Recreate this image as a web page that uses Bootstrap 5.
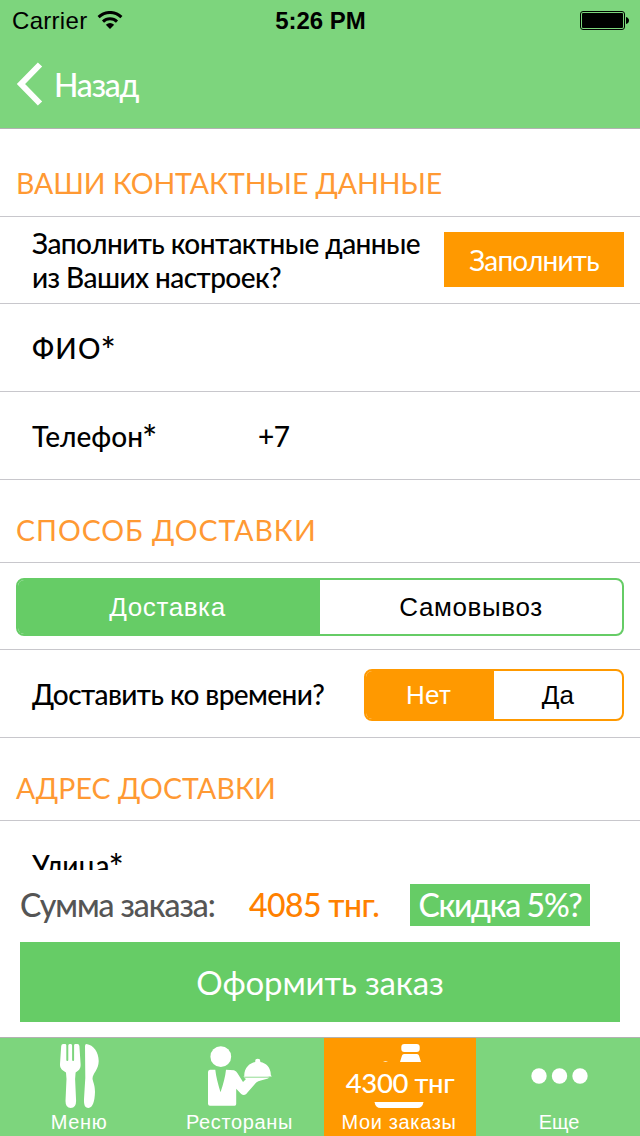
<!DOCTYPE html>
<html lang="ru">
<head>
<meta charset="utf-8">
<meta name="viewport" content="width=device-width, initial-scale=1">
<title>Оформление заказа</title>
<link href="https://cdn.jsdelivr.net/npm/bootstrap@5.3.0/dist/css/bootstrap.min.css" rel="stylesheet">
<style>
  body { font-family: Lato, "Open Sans", sans-serif; font-size: 28px; line-height: 34px; color: #000; background: #fff; font-weight: 500; }
  .screen { width: 640px; height: 1136px; }
  .sys { font-family: "Liberation Sans", Arial, sans-serif; font-weight: 400; }
  .topbar { height: 129px; background: #7dd57d; border-bottom: 1px solid #b2b2b2; }
  .statusbar { height: 40px; font-size: 24px; line-height: 40px; padding: 1px 11px 0 12px; }
  .statusbar > div { flex: 1 1 0; }
  .carrier { letter-spacing: .3px; }
  .wifi { margin-left: 10px; }
  .back { height: 88px; padding-left: 16px; color: #fff; font-size: 32px; letter-spacing: -1.2px; text-decoration: none; }
  .back:hover { color: #fff; }
  .back-label { margin-left: 11px; padding-top: 1px; }
  .form-scroll { height: 741px; }
  .form-row { border-bottom: 1px solid #c8c7cc; height: 88px; padding-left: 32px; padding-right: 16px; }
  .form-row.compact { height: 87px; }
  .field-name { width: 226px; line-height: 34px; }
  .field-name.caps { letter-spacing: 1.2px; }
  .star { font-size: 36px; line-height: 0; letter-spacing: 0; position: relative; top: 5px; margin-left: -1px; }
  .question { letter-spacing: -.57px; }
  .section-head { border-bottom: 1px solid #c8c7cc; height: 83px; padding: 17px 16px 0; color: #ff9933; font-size: 28.5px; font-weight: 400; margin: 0; line-height: 34px; letter-spacing: .1px; }
  .section-head.first { height: 88px; padding-top: 21px; letter-spacing: -.1px; }
  .section-head.wide { letter-spacing: .95px; }
  .btn-fill { width: 180px; height: 55px; margin-bottom: 1px; background: #ff9900; color: #fff; border: 0; border-radius: 0; font-size: 28px; letter-spacing: -.8px; padding: 0; }
  .seg { border: 2px solid; border-radius: 8px; overflow: hidden; font-size: 26px; }
  .seg-green { border-color: #66cc66; height: 58px; margin-top: 2px; letter-spacing: .6px; }
  .seg-orange { border-color: #ff9900; width: 260px; height: 52px; margin-top: 2px; letter-spacing: .3px; }
  .seg .on { color: #fff; padding-right: 3px; }
  .seg-green .on { background: #66cc66; }
  .seg-orange .on { background: #ff9900; }
  .summary { height: 72px; padding: 14px 20px 0; font-size: 32px; line-height: 42px; white-space: nowrap; }
  .sum-label { width: 229px; color: #555; letter-spacing: -1.05px; }
  .sum-price { width: 161px; color: #ff8000; letter-spacing: -.6px; }
  .discount { width: 180px; height: 42px; background: #66cc66; color: #fff; letter-spacing: -1.3px; }
  .btn-order { height: 80px; margin: 0 20px 15px; background: #66cc66; color: #fff; border: 0; border-radius: 0; font-size: 33px; letter-spacing: -.15px; }
  .tabs { height: 99px; background: #7dd57d; border-top: 1px solid #b2b2b2; }
  .tab { color: #fff; font-size: 20px; line-height: 24px; letter-spacing: .65px; text-decoration: none; height: 98px; }
  .tab:hover { color: #fff; }
  .tab svg { height: 72px; display: block; }
  .tab.current { background: #ff9900; }
  .tab-menu { width: 158px; }
  .tab-rest { width: 166px; padding-right: 3px; }
  .tab-cart { width: 152px; padding-right: 2px; }
  .tab-cart svg { width: 152px; }
  .tab-more { width: 164px; letter-spacing: 0; padding-left: 2px; }
  .total { left: 0; right: 0; top: 27px; font: 500 27.5px/36px Lato, sans-serif; letter-spacing: -.4px; }
</style>
</head>
<body>
<div class="screen d-flex flex-column overflow-hidden">
  <header class="topbar flex-shrink-0">
    <div class="statusbar sys d-flex">
      <div class="d-flex align-items-center"><span class="carrier">Carrier</span>
        <svg class="wifi" width="26" height="20" viewBox="0 0 26 20" fill="none" stroke="#000" stroke-width="3"><path d="M1.600 6.100C8-.1 18-.1 24.400 6.100M6 10.600c4-3.800 10-3.800 14 0"/><path d="M8.800 13.800Q13 10 17.200 13.800L13 18Z" fill="#000" stroke="none"/></svg>
      </div>
      <div class="text-center fw-bold">5:26 PM</div>
      <div class="d-flex justify-content-end align-items-center">
        <svg width="49" height="20" viewBox="0 0 49 20"><rect x=".5" y=".5" width="44" height="18" rx="2.500" fill="none" stroke="#000"/><rect x="2" y="2" width="41" height="15" rx="1"/><path d="M46 6q3 1 3 3.500T46 13z"/></svg>
      </div>
    </div>
    <a href="#" class="back d-flex align-items-center">
      <svg width="27" height="44" viewBox="0 0 27 44" fill="none" stroke="#fff" stroke-width="6"><path d="M24 2.500 5 22 24 41.500"/></svg>
      <span class="back-label">Назад</span>
    </a>
  </header>

  <main class="form-scroll flex-shrink-0 overflow-hidden">
    <h2 class="section-head first d-flex align-items-center">ВАШИ КОНТАКТНЫЕ ДАННЫЕ</h2>
    <div class="form-row compact d-flex align-items-center justify-content-between">
      <div class="question">Заполнить контактные данные<br>из Ваших настроек?</div>
      <button class="btn-fill">Заполнить</button>
    </div>
    <div class="form-row d-flex align-items-center"><div class="field-name caps">ФИО<span class="star">*</span></div></div>
    <div class="form-row d-flex align-items-center"><div class="field-name">Телефон<span class="star">*</span></div><span class="question">+7</span></div>
    <h2 class="section-head wide d-flex align-items-center">СПОСОБ ДОСТАВКИ</h2>
    <div class="form-row compact ps-3 d-flex align-items-center">
      <div class="seg seg-green sys d-flex w-100">
        <div class="on w-50 d-flex align-items-center justify-content-center">Доставка</div>
        <div class="w-50 d-flex align-items-center justify-content-center">Самовывоз</div>
      </div>
    </div>
    <div class="form-row d-flex align-items-center justify-content-between">
      <span class="question">Доставить ко времени?</span>
      <div class="seg seg-orange sys d-flex">
        <div class="on w-50 d-flex align-items-center justify-content-center">Нет</div>
        <div class="w-50 d-flex align-items-center justify-content-center">Да</div>
      </div>
    </div>
    <h2 class="section-head d-flex align-items-center">АДРЕС ДОСТАВКИ</h2>
    <div class="form-row d-flex align-items-center"><div class="field-name">Улица<span class="star">*</span></div></div>
  </main>

  <div class="summary d-flex flex-shrink-0">
    <div class="sum-label">Сумма заказа:</div>
    <div class="sum-price">4085 тнг.</div>
    <div class="discount text-center">Скидка 5%?</div>
  </div>
  <button class="btn-order flex-shrink-0">Оформить заказ</button>

  <nav class="tabs sys d-flex flex-shrink-0">
    <a href="#" class="tab tab-menu text-center">
      <svg class="mx-auto" width="60" viewBox="49 1038 60 72" fill="#fff"><path d="M63 1044h2q1.300 0 1.300 1.300V1060q0 1 1 1t1-1v-14.500q0-1.500 1.200-1.500h1.400q1.200 0 1.200 1.500V1060q0 1 1 1t1-1v-14.700q0-1.300 1.300-1.300h2q1.800 0 2 2l1.200 18c.3 5-2 6.500-5 8.500l-.5 6.500 1 22q0 7-5.300 7t-5.300-7l1-22-.5-6.500c-3-2-6.300-3.500-6-8.500l1.200-18q.2-2 2-2z"/><path d="M86.500 1044c7 1 12.200 8 12.200 17 0 9-6.200 12-6.200 18 1 4 2.500 7 2.500 13-.4 10-2.200 15.500-6.500 16-4 0-4.700-4-4.500-9l1.300-21-.3-32q0-2 1.500-2Z"/></svg>
      <span>Меню</span></a>
    <a href="#" class="tab tab-rest text-center">
      <svg class="mx-auto" width="80" viewBox="200 1038 80 72" fill="#fff"><circle cx="220.800" cy="1056.700" r="10.400"/><path d="M210 1069.800h5.300q1 9 5.200 22.500 4.500-13 5.500-22.500l8 .5q2.500 1 3.500 3l5.500 8.700 3-3q-2-1-2.500-2.500h24q2 0 1.700 1-1 1-3 1.500l-4.500 1.300q-4 .7-5.500 2.200l-10 11.500q-2.500 2-5 0l-5-5.200V1104q0 1.700-1.500 1.700H210q-2 0-2-2V1072q0-2 2-2.200z"/><path d="M244.300 1076.500c-.5-8.500 5.200-13.500 11-14.500q-.5-3.200 2.500-3.200t2.500 3.200c6 1 10.700 6 10.500 13l1 1.500z"/><path d="M244 1077.500h25" stroke="#7dd57d" stroke-width=".6"/></svg>
      <span>Рестораны</span></a>
    <a href="#" class="tab tab-cart current text-center position-relative">
      <svg viewBox="324 1038 152 72" fill="#fff"><rect x="401.300" y="1044" width="18.400" height="8" rx="3"/><path d="M404 1054h13q1.500 0 2 1.500l2 6.500h-21l2-6.500q.5-1.500 2-1.500zM374.500 1102h49q-1 6-6 6h-37q-5 0-6-6zM383 1061.700q2.500-1.500 5 0z"/></svg>
      <span class="total position-absolute text-center">4300 тнг</span><span>Мои заказы</span></a>
    <a href="#" class="tab tab-more text-center">
      <svg class="mx-auto" width="80" viewBox="518 1038 80 72" fill="#fff"><circle cx="538" cy="1076" r="7.700"/><circle cx="558.500" cy="1076" r="7.700"/><circle cx="579" cy="1076" r="7.700"/></svg>
      <span>Еще</span></a>
  </nav>
</div>
<script src="https://cdn.jsdelivr.net/npm/bootstrap@5.3.0/dist/js/bootstrap.bundle.min.js"></script>
</body>
</html>
